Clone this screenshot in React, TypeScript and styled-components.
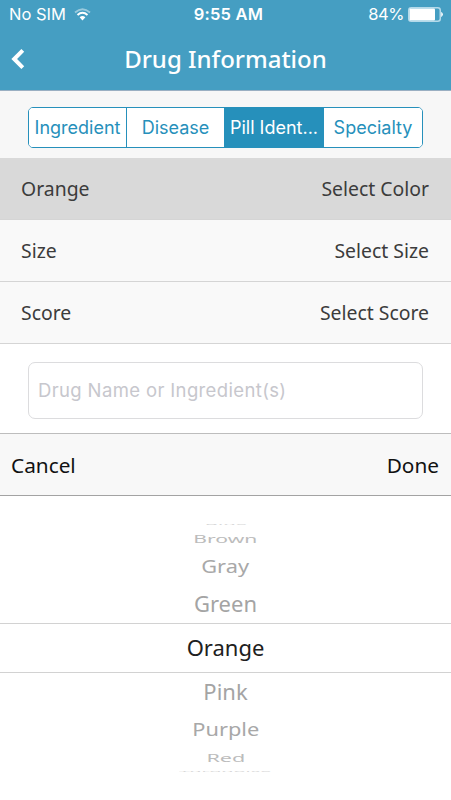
import React from "react";
import styled, { createGlobalStyle } from "styled-components";

const GlobalStyle = createGlobalStyle`
  * { box-sizing: border-box; }
  body { margin: 0; background: #fff; }
`;

const Screen = styled.main`
  display: flex;
  flex-direction: column;
  width: 451px;
  height: 800px;
  overflow: hidden;
  background: #fff;
  color: #3c3c3c;
  font-family: "Noto Sans", sans-serif;
`;

const Header = styled.header`
  height: 91px;
  flex: none;
  background: #459ec2;
  border-bottom: 1px solid #9aafc2;
  color: #fff;
`;

const StatusBar = styled.div`
  display: grid;
  grid-template-columns: 1fr auto 1fr;
  align-items: center;
  height: 29px;
  padding: 0 7px 0 9px;
  font: 400 16.5px/29px Inter, sans-serif;
`;

const StatusGroup = styled.div<{ $end?: boolean }>`
  display: flex;
  align-items: center;
  justify-content: ${(p) => (p.$end ? "flex-end" : "flex-start")};
  gap: ${(p) => (p.$end ? "4px" : "8px")};
  letter-spacing: ${(p) => (p.$end ? "-0.4px" : "0")};
`;

const Clock = styled.time`
  padding-left: 4px;
  font-weight: 600;
  letter-spacing: 0.2px;
`;

const NavBar = styled.div`
  display: grid;
  grid-template-columns: 40px 1fr 40px;
  align-items: center;
  height: 60px;
`;

const BackButton = styled.button`
  display: flex;
  padding: 0 0 0 11px;
  border: 0;
  background: none;
  color: inherit;
`;

const Title = styled.h1`
  margin: 0;
  text-align: center;
  font-size: 24px;
  font-weight: 500;
  line-height: 60px;
`;

const TabArea = styled.div`
  flex: none;
  height: 67px;
  padding: 16px 28px 0;
  background: #f7f7f7;
`;

const Segments = styled.div`
  display: grid;
  grid-template-columns: 98px 98px 99px 98px;
  width: 395px;
  height: 41px;
  border: 1px solid #2690bb;
  border-radius: 5px;
  overflow: hidden;
  background: #fff;
`;

const Segment = styled.button<{ $active?: boolean }>`
  padding: 0;
  border: 0;
  border-right: 1px solid #2690bb;
  background: ${(p) => (p.$active ? "#2690bb" : "#fff")};
  color: ${(p) => (p.$active ? "#fff" : "#2690bb")};
  font: 400 18px/39px Inter, sans-serif;
  white-space: nowrap;
  &:last-child { border-right: 0; }
`;

const FilterRow = styled.div<{ $selected?: boolean }>`
  display: flex;
  flex: none;
  justify-content: space-between;
  height: 62px;
  padding: 0 22px 0 21px;
  border-bottom: 1px solid #d5d5d5;
  background: ${(p) => (p.$selected ? "#d9d9d9" : "#f9f9f9")};
  font-size: 19.4px;
  line-height: 62px;
`;

const SearchArea = styled.div`
  flex: none;
  height: 89px;
  padding: 18px 28px 0;
`;

const SearchInput = styled.input`
  display: block;
  width: 395px;
  height: 57px;
  padding: 0 9px 2px;
  border: 1px solid #dcdcde;
  border-radius: 7px;
  background: #fff;
  font: 400 18.5px Inter, sans-serif;
  letter-spacing: 0.36px;
  outline: 0;
  &::placeholder { color: #c7c7cd; opacity: 1; }
`;

const PickerToolbar = styled.div`
  display: flex;
  flex: none;
  justify-content: space-between;
  height: 63px;
  padding: 0 12px 0 11px;
  border-top: 1px solid #bdbdbd;
  border-bottom: 1px solid #a3a3a3;
  background: #f8f8f8;
`;

const ToolbarButton = styled.button`
  padding: 0;
  border: 0;
  background: none;
  color: #111;
  font: 400 20.8px/62px "Noto Sans", sans-serif;
`;

const Wheel = styled.div`
  display: flex;
  flex-direction: column;
  padding-top: 22px;
`;

const WheelRow = styled.div<{ $height: number; $selected?: boolean }>`
  display: flex;
  flex: none;
  align-items: center;
  justify-content: center;
  height: ${(p) => p.$height}px;
  border: 0 solid #d2d2d2;
  border-width: ${(p) => (p.$selected ? "1px 0" : "0")};
`;

const WheelLabel = styled.span<{ $x: number; $y: number; $color: string }>`
  padding-bottom: 2px;
  color: ${(p) => p.$color};
  font-size: 22px;
  line-height: 30px;
  transform: scale(${(p) => p.$x}, ${(p) => p.$y});
`;

const tabs = [
  { name: "Ingredient" },
  { name: "Disease" },
  { name: "Pill Ident...", active: true },
  { name: "Specialty" },
];

const filters = [
  { label: "Orange", action: "Select Color", selected: true },
  { label: "Size", action: "Select Size" },
  { label: "Score", action: "Select Score" },
];

const colors = [
  { name: "Blue", height: 12, x: 0.92, y: 0.1, color: "#d8d8d8" },
  { name: "Brown", height: 18, x: 0.96, y: 0.46, color: "#bcbcbc" },
  { name: "Gray", height: 37, x: 0.99, y: 0.8, color: "#a8a8a8" },
  { name: "Green", height: 38, x: 1, y: 0.96, color: "#a4a4a4" },
  { name: "Orange", height: 50, x: 1, y: 1, color: "#202020", selected: true },
  { name: "Pink", height: 38, x: 1, y: 0.96, color: "#a4a4a4" },
  { name: "Purple", height: 38, x: 0.99, y: 0.8, color: "#a8a8a8" },
  { name: "Red", height: 17, x: 0.98, y: 0.46, color: "#bcbcbc" },
  { name: "Turquoise", height: 10, x: 0.9, y: 0.1, color: "#d8d8d8" },
];

const WifiIcon = () => (
  <svg width="17" height="13" viewBox="0 0 17 13" fill="none">
    <path d="M1 4.5Q8.5-2 16 4.5" stroke="#fff" strokeWidth="1.8" opacity=".45" />
    <path d="M3.5 7Q8.5 2.6 13.5 7" stroke="#fff" strokeWidth="2" />
    <path d="M5.6 9.3Q8.5 6.8 11.4 9.3L8.5 12.4Z" fill="#fff" />
  </svg>
);

const BatteryIcon = () => (
  <svg width="36" height="15" viewBox="0 0 36 15">
    <rect x=".75" y=".75" width="31.5" height="13.5" rx="2.5" fill="none" stroke="#b5daea" strokeWidth="1.5" />
    <rect x="1.5" y="1.5" width="25.5" height="12" rx="1" fill="#fff" />
    <path d="M33.2 4.8Q36.6 7.5 33.2 10.2Z" fill="#fff" />
  </svg>
);

const BackIcon = () => (
  <svg width="15" height="22" viewBox="0 0 15 22" fill="none">
    <path d="M11.8 2.4 3.2 11l8.6 8.6" stroke="#fff" strokeWidth="4" />
  </svg>
);

export default function App() {
  return (
    <>
      <GlobalStyle />
      <Screen>
        <Header>
          <StatusBar>
            <StatusGroup>No SIM <WifiIcon /></StatusGroup>
            <Clock>9:55 AM</Clock>
            <StatusGroup $end>84% <BatteryIcon /></StatusGroup>
          </StatusBar>
          <NavBar>
            <BackButton aria-label="Back"><BackIcon /></BackButton>
            <Title>Drug Information</Title>
          </NavBar>
        </Header>
        <TabArea>
          <Segments>
            {tabs.map((t) => (
              <Segment key={t.name} $active={t.active}>{t.name}</Segment>
            ))}
          </Segments>
        </TabArea>
        {filters.map((f) => (
          <FilterRow key={f.label} $selected={f.selected}>
            <span>{f.label}</span>
            <span>{f.action}</span>
          </FilterRow>
        ))}
        <SearchArea>
          <SearchInput placeholder="Drug Name or Ingredient(s)" />
        </SearchArea>
        <PickerToolbar>
          <ToolbarButton>Cancel</ToolbarButton>
          <ToolbarButton>Done</ToolbarButton>
        </PickerToolbar>
        <Wheel>
          {colors.map((c) => (
            <WheelRow key={c.name} $height={c.height} $selected={c.selected}>
              <WheelLabel $x={c.x} $y={c.y} $color={c.color}>{c.name}</WheelLabel>
            </WheelRow>
          ))}
        </Wheel>
      </Screen>
    </>
  );
}
